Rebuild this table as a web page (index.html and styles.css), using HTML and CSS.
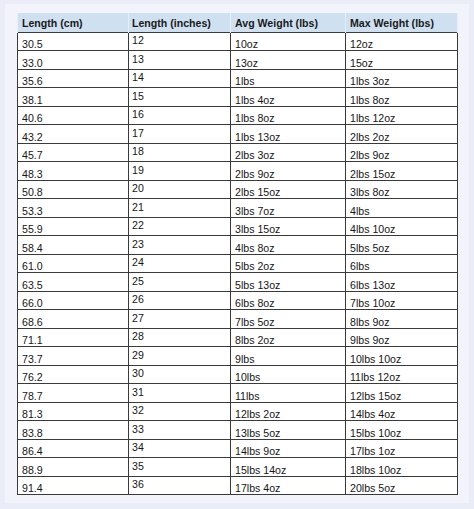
FILE: index.html
```html
<!DOCTYPE html>
<html>
<head>
<meta charset="utf-8">
<link rel="stylesheet" href="styles.css">
</head>
<body>
<div class="panel">
<table class="chart">
<colgroup>
<col class="c1"><col class="c2"><col class="c3"><col class="c4">
</colgroup>
<thead>
<tr class="head"><th>Length (cm)</th><th>Length (inches)</th><th>Avg Weight (lbs)</th><th>Max Weight (lbs)</th></tr>
</thead>
<tbody>
<tr><td>30.5</td><td class="in">12</td><td>10oz</td><td>12oz</td></tr>
<tr><td>33.0</td><td class="in">13</td><td>13oz</td><td>15oz</td></tr>
<tr><td>35.6</td><td class="in">14</td><td>1lbs</td><td>1lbs 3oz</td></tr>
<tr><td>38.1</td><td class="in">15</td><td>1lbs 4oz</td><td>1lbs 8oz</td></tr>
<tr><td>40.6</td><td class="in">16</td><td>1lbs 8oz</td><td>1lbs 12oz</td></tr>
<tr><td>43.2</td><td class="in">17</td><td>1lbs 13oz</td><td>2lbs 2oz</td></tr>
<tr><td>45.7</td><td class="in">18</td><td>2lbs 3oz</td><td>2lbs 9oz</td></tr>
<tr><td>48.3</td><td class="in">19</td><td>2lbs 9oz</td><td>2lbs 15oz</td></tr>
<tr><td>50.8</td><td class="in">20</td><td>2lbs 15oz</td><td>3lbs 8oz</td></tr>
<tr><td>53.3</td><td class="in">21</td><td>3lbs 7oz</td><td>4lbs</td></tr>
<tr><td>55.9</td><td class="in">22</td><td>3lbs 15oz</td><td>4lbs 10oz</td></tr>
<tr><td>58.4</td><td class="in">23</td><td>4lbs 8oz</td><td>5lbs 5oz</td></tr>
<tr><td>61.0</td><td class="in">24</td><td>5lbs 2oz</td><td>6lbs</td></tr>
<tr><td>63.5</td><td class="in">25</td><td>5lbs 13oz</td><td>6lbs 13oz</td></tr>
<tr><td>66.0</td><td class="in">26</td><td>6lbs 8oz</td><td>7lbs 10oz</td></tr>
<tr><td>68.6</td><td class="in">27</td><td>7lbs 5oz</td><td>8lbs 9oz</td></tr>
<tr><td>71.1</td><td class="in">28</td><td>8lbs 2oz</td><td>9lbs 9oz</td></tr>
<tr><td>73.7</td><td class="in">29</td><td>9lbs</td><td>10lbs 10oz</td></tr>
<tr><td>76.2</td><td class="in">30</td><td>10lbs</td><td>11lbs 12oz</td></tr>
<tr><td>78.7</td><td class="in">31</td><td>11lbs</td><td>12lbs 15oz</td></tr>
<tr><td>81.3</td><td class="in">32</td><td>12lbs 2oz</td><td>14lbs 4oz</td></tr>
<tr><td>83.8</td><td class="in">33</td><td>13lbs 5oz</td><td>15lbs 10oz</td></tr>
<tr><td>86.4</td><td class="in">34</td><td>14lbs 9oz</td><td>17lbs 1oz</td></tr>
<tr><td>88.9</td><td class="in">35</td><td>15lbs 14oz</td><td>18lbs 10oz</td></tr>
<tr><td>91.4</td><td class="in">36</td><td>17lbs 4oz</td><td>20lbs 5oz</td></tr>
</tbody>
</table>
</div>
</body>
</html>
```

FILE: styles.css
```css
html, body {
  margin: 0;
  padding: 0;
  background: #eaecf7;
}
body {
  width: 474px;
  height: 509px;
  overflow: hidden;
  padding: 4px 5px;
  box-sizing: border-box;
}
.panel {
  background: #f2f3fb;
  width: 464px;
  height: 499px;
  box-sizing: border-box;
  padding: 9px 0 0 12px;
}
.chart {
  border-collapse: collapse;
  table-layout: fixed;
  width: 440px;
  font-family: "Liberation Sans", Arial, sans-serif;
  font-size: 10.6px;
  color: #161616;
  background: #fff;
}
.c1 { width: 111px; }
.c2 { width: 102px; }
.c3 { width: 115px; }
.c4 { width: 112px; }
.chart tr { height: 18.52px; }
.chart tr.head { height: 19px; }
.chart th {
  padding: 1px 0 0 4px;
  background: #cfe0f1;
  text-align: left;
  font-weight: bold;
  color: #1a1a1a;
  border-left: 1px solid #e6eef8;
  border-right: 1px solid #e6eef8;
  vertical-align: middle;
  line-height: 12px;
}
.chart th:nth-child(2) { padding-left: 3px; }
.chart td {
  padding: 0 0 0 4px;
  border: 1px solid #3a3a3a;
  vertical-align: bottom;
  line-height: 12px;
  white-space: nowrap;
}
.chart td.in {
  vertical-align: top;
  padding-top: 1.5px;
  padding-left: 3px;
}
```
